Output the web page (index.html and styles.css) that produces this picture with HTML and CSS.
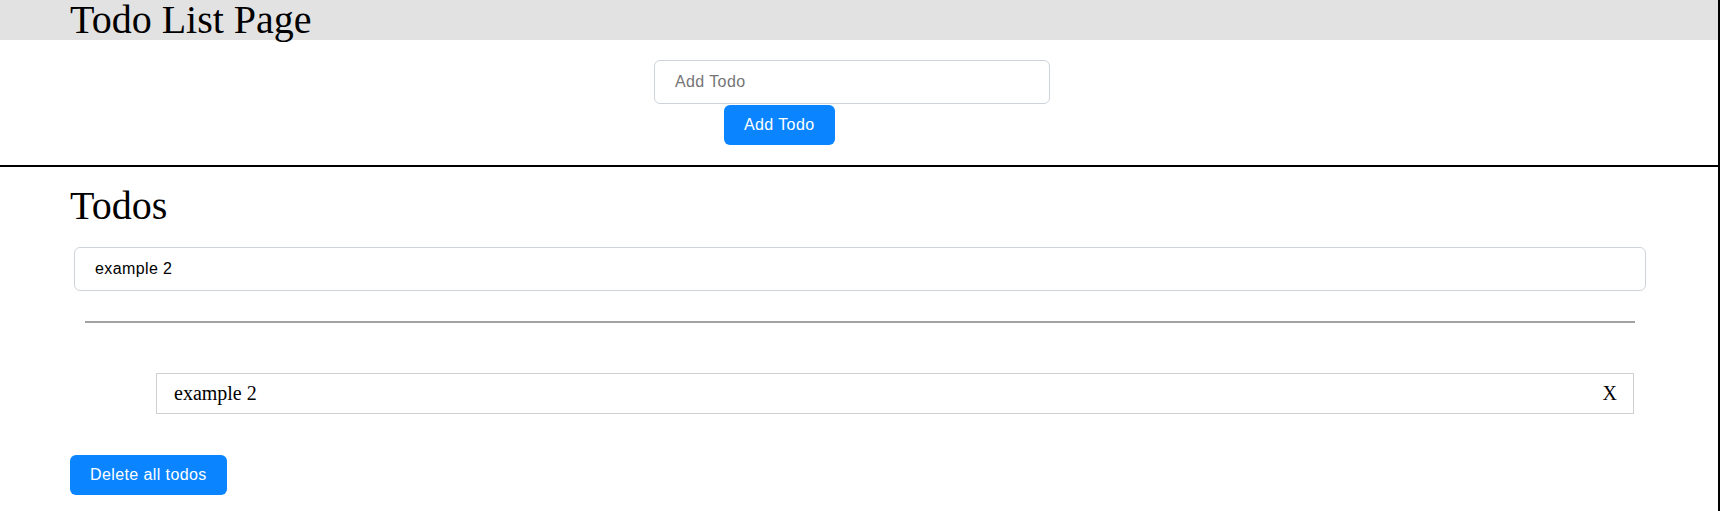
FILE: index.html
```html
<!DOCTYPE html>
<html lang="en">
<head>
<meta charset="utf-8">
<title>Todo List Page</title>
<link rel="stylesheet" href="styles.css">
</head>
<body>
<div class="page">
  <section class="top">
    <header class="site-header">
      <h1 class="site-title">Todo List Page</h1>
    </header>
    <div class="add-wrap">
      <form class="add-form">
        <input class="add-input" type="text" placeholder="Add Todo">
        <button class="btn add-btn" type="button">Add Todo</button>
      </form>
    </div>
  </section>
  <section class="todos">
    <h2 class="todos-title">Todos</h2>
    <input class="edit-input" type="text" value="example 2">
    <hr class="divider">
    <ul class="todo-list">
      <li class="todo-item"><span class="todo-text">example 2</span><span class="todo-remove">X</span></li>
    </ul>
    <button class="btn delete-btn" type="button">Delete all todos</button>
  </section>
</div>
</body>
</html>
```

FILE: styles.css
```css
* { box-sizing: border-box; }

html, body {
  margin: 0;
  padding: 0;
  background: #fff;
}

body {
  font-family: "Liberation Serif", "Times New Roman", serif;
  color: #000;
}

.page {
  margin-right: 1px;
  border-right: 2px solid #000;
  min-height: 100vh;
}

.top {
  border-bottom: 2px solid #000;
  padding-bottom: 20px;
}

.site-header {
  background: #e2e2e2;
  height: 40px;
  padding-left: 70px;
}

.site-title {
  margin: 0;
  font-family: "Liberation Serif", "Times New Roman", serif;
  font-weight: normal;
  font-size: 40px;
  line-height: 40px;
  white-space: nowrap;
}

.add-wrap {
  padding-top: 20px;
  padding-right: 14px;
}

.add-form {
  width: 396px;
  margin: 0 auto;
  display: flex;
  flex-direction: column;
  align-items: flex-start;
}

.add-input {
  width: 396px;
  height: 44px;
  margin: 0;
  padding: 0 20px;
  border: 1px solid #ced4da;
  border-radius: 6px;
  font-family: "Liberation Sans", Arial, sans-serif;
  font-size: 16px;
  letter-spacing: 0.4px;
  color: #000;
  outline: none;
}

.add-input::placeholder {
  color: #757575;
}

.btn {
  display: block;
  border: 0;
  border-radius: 6px;
  background: #0a85ff;
  color: #fff;
  font-family: "Liberation Sans", Arial, sans-serif;
  font-size: 16px;
  letter-spacing: 0.4px;
  line-height: 24px;
  padding: 8px 20px;
  cursor: pointer;
}

.add-btn {
  margin-top: 1px;
  margin-left: 70px;
}

.todos {
  padding: 19px 70px 0 70px;
}

.todos-title {
  margin: 0;
  font-family: "Liberation Serif", "Times New Roman", serif;
  font-weight: normal;
  font-size: 40px;
  line-height: 40px;
}

.edit-input {
  display: block;
  width: calc(100% - 6px);
  height: 44px;
  margin: 21px 2px 0 4px;
  padding: 0 20px;
  border: 1px solid #ced4da;
  border-radius: 6px;
  font-family: "Liberation Sans", Arial, sans-serif;
  font-size: 16px;
  letter-spacing: 0.4px;
  color: #000;
  outline: none;
  background: #fff;
}

.divider {
  height: 0;
  margin: 30px 13px 0 15px;
  border: 0;
  border-top: 2px solid #a3a3a3;
}

.todo-list {
  list-style: none;
  margin: 50px 14px 0 86px;
  padding: 0;
}

.todo-item {
  display: flex;
  justify-content: space-between;
  align-items: center;
  border: 1px solid #d0d0d0;
  padding: 8px 16px 8px 17px;
  font-family: "Liberation Serif", "Times New Roman", serif;
  font-size: 20px;
  line-height: 23px;
}

.todo-remove {
  cursor: pointer;
}

.delete-btn {
  margin-top: 41px;
}
```
